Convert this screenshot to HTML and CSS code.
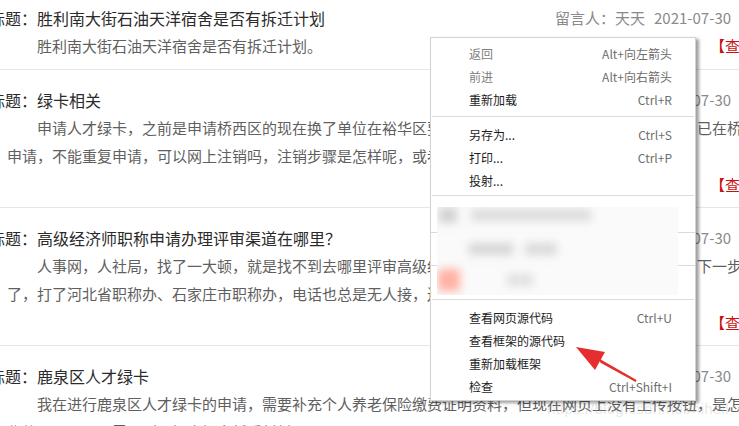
FILE: index.html
```html
<!DOCTYPE html>
<html lang="zh-CN">
<head>
<meta charset="utf-8">
<title>留言列表</title>
<link rel="stylesheet" href="styles.css">
</head>
<body>
<div class="list">
  <div class="item">
    <div class="head">
      <div class="title">标题：胜利南大街石油天洋宿舍是否有拆迁计划</div>
      <div class="meta">留言人：天天<span class="date">2021-07-30</span></div>
    </div>
    <div class="body-line">
      <p class="text">胜利南大街石油天洋宿舍是否有拆迁计划。</p>
      <a class="action">【查看】</a>
    </div>
  </div>
  <div class="item">
    <div class="head">
      <div class="title">标题：绿卡相关</div>
      <div class="meta">留言人：小李<span class="date">2021-07-30</span></div>
    </div>
    <p class="text">申请人才绿卡，之前是申请桥西区的现在换了单位在裕华区要重新申请，但现在提示已有申请记录，已在桥西区申请，不能重复申请，可以网上注销吗，注销步骤是怎样呢，或者需要到现场办理吗？谢谢。</p>
    <div class="action-row"><a class="action">【查看】</a></div>
  </div>
  <div class="item">
    <div class="head">
      <div class="title">标题：高级经济师职称申请办理评审渠道在哪里？</div>
      <div class="meta">留言人：老张<span class="date">2021-07-30</span></div>
    </div>
    <p class="text">人事网，人社局，找了一大顿，就是找不到去哪里评审高级经济师职称，也不知道去哪个部门办理，下一步没辙了，打了河北省职称办、石家庄市职称办，电话也总是无人接，还有其他途径吗？</p>
    <div class="action-row"><a class="action">【查看】</a></div>
  </div>
  <div class="item">
    <div class="head">
      <div class="title">标题：鹿泉区人才绿卡</div>
      <div class="meta">留言人：小王<span class="date">2021-07-30</span></div>
    </div>
    <p class="text">我在进行鹿泉区人才绿卡的申请，需要补充个人养老保险缴费证明资料，但现在网页上没有上传按钮，是怎么操作的呢？是不是需要到现场去提交纸质材料？</p>
  </div>
</div>

<div class="watermark">https://blog.csdn.net/hihell</div>

<div class="menu">
  <div class="mi disabled"><span>返回</span><span class="sc">Alt+向左箭头</span></div>
  <div class="mi disabled"><span>前进</span><span class="sc">Alt+向右箭头</span></div>
  <div class="mi"><span>重新加载</span><span class="sc">Ctrl+R</span></div>
  <div class="sep sep-a"></div>
  <div class="mi"><span>另存为...</span><span class="sc">Ctrl+S</span></div>
  <div class="mi"><span>打印...</span><span class="sc">Ctrl+P</span></div>
  <div class="mi"><span>投射...</span></div>
  <div class="sep sep-b"></div>
  <div class="blurred">
    <div class="bline bline-1"></div>
    <div class="bline bline-2"></div>
    <div class="bpanel">
      <div class="blob b1"></div>
      <div class="blob b2"></div>
      <div class="blob b3"></div>
      <div class="blob b4"></div>
      <div class="blob b5"></div>
      <div class="blob b6"></div>
    </div>
  </div>
  <div class="sep sep-c"></div>
  <div class="mi"><span>查看网页源代码</span><span class="sc">Ctrl+U</span></div>
  <div class="mi"><span>查看框架的源代码</span></div>
  <div class="mi"><span>重新加载框架</span></div>
  <div class="mi"><span>检查</span><span class="sc">Ctrl+Shift+I</span></div>
</div>

<svg class="arrow" width="72" height="46" viewBox="0 0 72 46">
  <polygon points="5,6 34,11 24,29" fill="#e62e2e"/>
  <polygon points="27.5,17.2 29.5,21.8 64.6,41 65.6,39" fill="#e62e2e"/>
</svg>
</body>
</html>
```
FILE: styles.css
```css
html, body {
  margin: 0;
  padding: 0;
  overflow: hidden;
  background: #fff;
}

body {
  width: 739px;
  height: 426px;
  position: relative;
  font-family: "Noto Sans CJK SC", "Noto Sans", sans-serif;
}

.list {
  margin-top: -12px;
  margin-left: -11px;
  width: 795px;
}

.item {
  padding: 16px 0 9px;
  border-bottom: 1px solid #e6e6e6;
}

.head {
  display: flex;
  height: 28px;
  line-height: 28px;
}

.title {
  flex: 1;
  font-size: 16px;
  color: #2b2b2b;
  white-space: nowrap;
}

.meta {
  width: 229px;
  font-size: 15px;
  color: #8a8a8a;
  white-space: nowrap;
}

.date {
  margin-left: 9px;
}

.text {
  margin: 0;
  padding: 0 4px 0 18px;
  font-size: 15px;
  line-height: 28px;
  text-indent: 30px;
  color: #5f5f5f;
}

.body-line {
  display: flex;
  justify-content: space-between;
}

.body-line .text {
  flex: 1;
}

.action-row {
  text-align: right;
  height: 28px;
  line-height: 28px;
}

.action {
  font-size: 15px;
  line-height: 28px;
  color: #cc1010;
  padding-right: 14px;
  white-space: nowrap;
}

.watermark {
  position: absolute;
  left: 547px;
  top: 400px;
  font-family: "Liberation Sans", sans-serif;
  font-size: 15px;
  color: rgba(190, 190, 190, 0.35);
  letter-spacing: 0.3px;
}

/* context menu */
.menu {
  position: absolute;
  left: 430px;
  top: 37px;
  width: 264px;
  padding: 4px 0 2px;
  background: #fff;
  border: 1px solid #d2d2d2;
  box-shadow: 3px 2px 3px rgba(0, 0, 0, 0.38);
  font-size: 12px;
  color: #1c1c1c;
}

.mi {
  display: flex;
  justify-content: space-between;
  align-items: center;
  height: 23px;
  padding: 0 23px 0 38px;
  white-space: nowrap;
}

.mi.disabled {
  color: #808080;
}

.sc {
  color: #6e6e6e;
}

.sep {
  height: 1px;
  background: #dcdcdc;
  margin: 0 1px;
}

.sep-a {
  margin-top: 5px;
  margin-bottom: 6px;
}

.sep-b {
  margin-top: 3px;
}

.sep-c {
  margin-bottom: 6px;
}

.blurred {
  position: relative;
  height: 103px;
}

.bline {
  position: absolute;
  left: 0;
  right: 0;
  height: 1px;
  background: #dadada;
}

.bline-1 { top: 36px; }
.bline-2 { top: 69px; }

.bpanel {
  position: absolute;
  left: 6px;
  top: 11px;
  width: 241px;
  height: 88px;
  background: rgba(250, 250, 250, 0.94);
  overflow: hidden;
}

.blob {
  position: absolute;
  filter: blur(4px);
}

.b1 { left: 2px; top: 0; width: 18px; height: 16px; background: #d2d2d2; }
.b2 { left: 34px; top: 2px; width: 120px; height: 12px; background: #dcdcdc; }
.b3 { left: 32px; top: 36px; width: 44px; height: 12px; background: #d6d6d6; }
.b4 { left: 88px; top: 36px; width: 32px; height: 12px; background: #dadada; }
.b5 { left: 1px; top: 62px; width: 22px; height: 22px; background: #ffb2a4; }
.b6 { left: 70px; top: 67px; width: 26px; height: 12px; background: #e0e0e0; }

.arrow {
  position: absolute;
  left: 571px;
  top: 341px;
}
```
